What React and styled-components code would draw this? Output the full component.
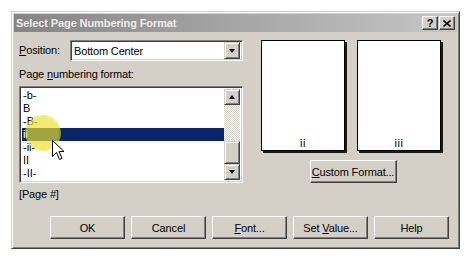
import React from 'react';
import styled, { createGlobalStyle } from 'styled-components';

const Global = createGlobalStyle`
  html, body { margin: 0; padding: 0; background: #fff; }
  body { font-family: "Liberation Sans", Arial, sans-serif; font-size: 11px; color: #000; }
  * { box-sizing: border-box; }
`;

const Page = styled.div`
  width: 470px;
  height: 260px;
  padding: 11px 0 0 11px;
`;

const Dialog = styled.div`
  width: 449px;
  height: 238px;
  background: #d4d0c8;
  border: 1px solid;
  border-color: #d4d0c8 #404040 #404040 #d4d0c8;
  box-shadow: inset 1px 1px #fff, inset -1px -1px #808080;
  padding: 2px;
  display: flex;
  flex-direction: column;
`;

const TitleBar = styled.div`
  height: 18px;
  background: linear-gradient(to right, #858585, #c6c6c6);
  display: flex;
  align-items: center;
  padding: 0 2px 0 2px;
`;

const TitleText = styled.div`
  flex: 1;
  font-weight: bold;
  font-size: 11px;
  color: #eeece8;
  letter-spacing: -0.1px;
`;

const CaptionButton = styled.div`
  width: 16px;
  height: 14px;
  margin-left: ${p => p.$gap || 0}px;
  background: #d4d0c8;
  border: 1px solid;
  border-color: #fff #404040 #404040 #fff;
  box-shadow: inset -1px -1px #808080;
  display: flex;
  align-items: center;
  justify-content: center;
  font-weight: bold;
  font-size: 11px;
  line-height: 1;
`;

const Body = styled.div`
  flex: 1;
  display: grid;
  grid-template-columns: 224px 1fr;
  column-gap: 18px;
  padding: 8px 0 0 5px;
`;

const LeftCol = styled.div`
  display: flex;
  flex-direction: column;
`;

const FieldRow = styled.div`
  display: flex;
  align-items: center;
  height: 21px;
`;

const Label = styled.div`
  width: ${p => p.$w ? p.$w + 'px' : 'auto'};
  line-height: 13px;
  margin-top: ${p => p.$mt || 0}px;
  letter-spacing: -0.15px;
  white-space: nowrap;
`;

const Sunken = styled.div`
  border: 1px solid;
  border-color: #808080 #fff #fff #808080;
  box-shadow: inset 1px 1px #404040, inset -1px -1px #d4d0c8;
  background: #fff;
  padding: 2px;
`;

const Combo = styled(Sunken)`
  width: 173px;
  height: 21px;
  display: flex;
  align-items: center;
  padding: 2px 2px 2px 3px;
`;

const ComboText = styled.div`
  flex: 1;
  letter-spacing: -0.15px;
`;

const ArrowButton = styled.div`
  width: 16px;
  height: ${p => p.$h || 16}px;
  flex: none;
  background: #d4d0c8;
  border: 1px solid;
  border-color: #d4d0c8 #404040 #404040 #d4d0c8;
  box-shadow: inset 1px 1px #fff, inset -1px -1px #808080;
  display: flex;
  align-items: center;
  justify-content: center;
`;

const Triangle = styled.div`
  width: 0;
  height: 0;
  border-left: 3.5px solid transparent;
  border-right: 3.5px solid transparent;
  ${p => p.$up ? 'border-bottom: 4px solid #000;' : 'border-top: 4px solid #000;'}
`;

const ListBox = styled(Sunken)`
  position: relative;
  margin-top: 5px;
  height: 97px;
  display: flex;
  padding: 2px 2px 2px 2px;
  overflow: hidden;
`;

const Items = styled.div`
  flex: 1;
  display: flex;
  flex-direction: column;
`;

const Item = styled.div`
  height: 13px;
  line-height: 13px;
  padding-left: 1px;
  background: ${p => p.$sel ? '#0a246a' : 'transparent'};
  color: ${p => p.$sel ? '#fff' : '#000'};
`;

const ScrollBar = styled.div`
  width: 16px;
  display: flex;
  flex-direction: column;
`;

const Track = styled.div`
  height: ${p => p.$h}px;
  background-color: #fff;
  background-image: repeating-conic-gradient(#d4d0c8 0 25%, #fff 0 50%);
  background-size: 2px 2px;
`;

const Thumb = styled.div`
  height: ${p => p.$h}px;
  background: #d4d0c8;
  border: 1px solid;
  border-color: #d4d0c8 #404040 #404040 #d4d0c8;
  box-shadow: inset 1px 1px #fff, inset -1px -1px #808080;
`;

const Highlight = styled.div`
  position: absolute;
  left: 5px;
  top: 28px;
  width: 36px;
  height: 36px;
  border-radius: 50%;
  background: radial-gradient(circle, rgba(235, 225, 40, 0.68) 0 60%, rgba(235, 225, 40, 0.4) 78%, rgba(235, 225, 40, 0) 100%);
  pointer-events: none;
`;

const Cursor = styled.svg`
  position: absolute;
  left: 32px;
  top: 53px;
`;

const Caption = styled.div`
  margin-top: 5px;
  line-height: 13px;
  letter-spacing: -0.15px;
`;

const RightCol = styled.div`
  display: flex;
  flex-direction: column;
  align-items: center;
  width: 184px;
`;

const Previews = styled.div`
  display: flex;
  gap: 12px;
  width: 100%;
`;

const PreviewPage = styled.div`
  width: 84px;
  height: 111px;
  background: #fff;
  border: 1px solid #000;
  box-shadow: 2px 2px 0 #1a1a1a;
  display: flex;
  flex-direction: column;
  justify-content: flex-end;
  align-items: center;
  line-height: 11px;
  padding-bottom: 1px;
  letter-spacing: 0.5px;
`;

const Button = styled.div`
  width: ${p => p.$w || 75}px;
  height: 23px;
  flex: none;
  background: #d4d0c8;
  border: 1px solid;
  border-color: #fff #404040 #404040 #fff;
  box-shadow: inset -1px -1px #808080;
  display: flex;
  align-items: center;
  justify-content: center;
  letter-spacing: -0.15px;
  margin-top: ${p => p.$mt || 0}px;
  white-space: pre;
`;

const ButtonRow = styled.div`
  display: flex;
  justify-content: flex-end;
  gap: 6px;
  padding: 0 8px 7px 0;
`;

const U = styled.span`
  text-decoration: underline;
  text-underline-offset: 1px;
`;

const items = ['-b-', 'B', '-B-', 'ii', '-ii-', 'II', '-II-'];

export default function App() {
  return (
    <>
      <Global />
      <Page>
        <Dialog>
          <TitleBar>
            <TitleText>Select Page Numbering Format</TitleText>
            <CaptionButton>?</CaptionButton>
            <CaptionButton $gap={1}>
              <svg width="8" height="7" viewBox="0 0 8 7">
                <path d="M0.5 0.5 L7.5 6.5 M7.5 0.5 L0.5 6.5" stroke="#000" strokeWidth="1.6" />
              </svg>
            </CaptionButton>
          </TitleBar>
          <Body>
            <LeftCol>
              <FieldRow>
                <Label $w={51}><U>P</U>osition:</Label>
                <Combo>
                  <ComboText>Bottom Center</ComboText>
                  <ArrowButton $h={17}><Triangle /></ArrowButton>
                </Combo>
              </FieldRow>
              <Label $mt={7}>Page <U>n</U>umbering format:</Label>
              <ListBox>
                <Items>
                  {items.map((t, i) => (
                    <Item key={i} $sel={t === 'ii'}>{t}</Item>
                  ))}
                </Items>
                <ScrollBar>
                  <ArrowButton><Triangle $up /></ArrowButton>
                  <Track $h={37} />
                  <Thumb $h={24} />
                  <ArrowButton><Triangle /></ArrowButton>
                </ScrollBar>
                <Highlight />
                <Cursor width="13" height="21" viewBox="0 0 13 21">
                  <path d="M0.5 0.5 L0.5 16.5 L4.5 12.5 L7.5 19.5 L10 18.5 L7 11.5 L12 11.5 Z" fill="#fff" stroke="#000" strokeWidth="1" strokeLinejoin="miter" />
                </Cursor>
              </ListBox>
              <Caption>[Page #]</Caption>
            </LeftCol>
            <RightCol>
              <Previews>
                <PreviewPage>ii</PreviewPage>
                <PreviewPage>iii</PreviewPage>
              </Previews>
              <Button $w={87} $mt={9}><span><U>C</U>ustom Format...</span></Button>
            </RightCol>
          </Body>
          <ButtonRow>
            <Button><span>OK</span></Button>
            <Button><span>Cancel</span></Button>
            <Button><span><U>F</U>ont...</span></Button>
            <Button><span>Set <U>V</U>alue...</span></Button>
            <Button><span>Help</span></Button>
          </ButtonRow>
        </Dialog>
      </Page>
    </>
  );
}
